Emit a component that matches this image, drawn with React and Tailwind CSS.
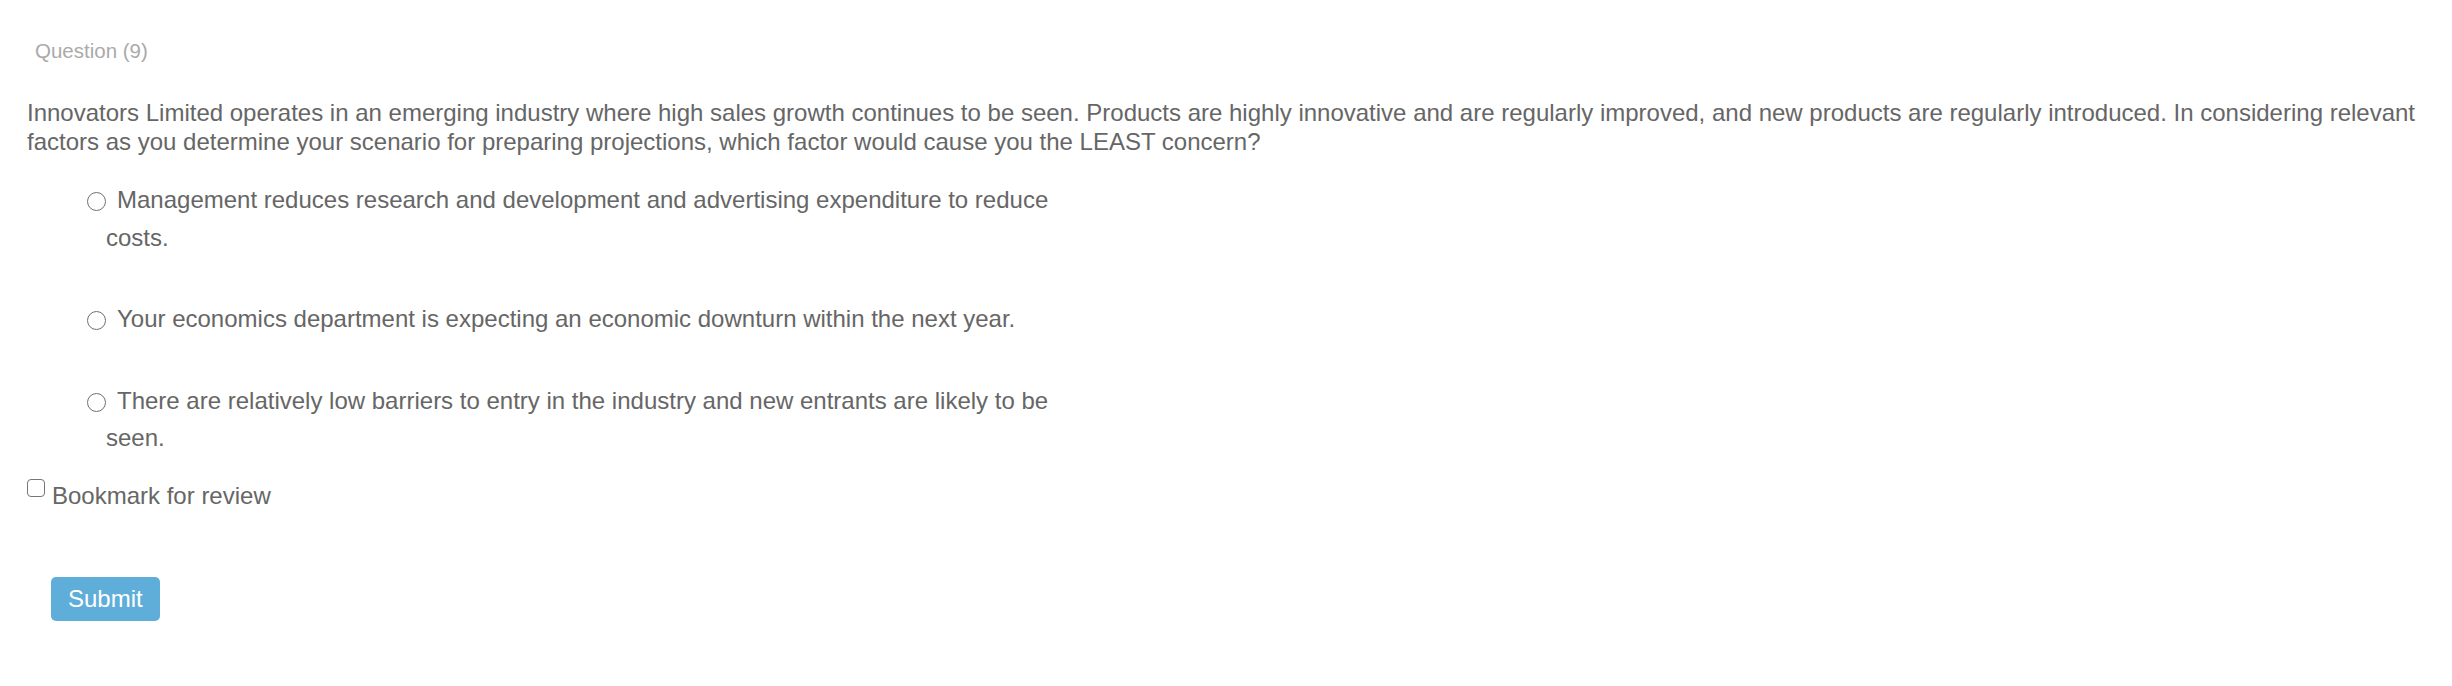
import React, { useState } from 'react';

const options = [
  'Management reduces research and development and advertising expenditure to reduce costs.',
  'Your economics department is expecting an economic downturn within the next year.',
  'There are relatively low barriers to entry in the industry and new entrants are likely to be seen.',
];

const App = () => {
  const [selected, setSelected] = useState(null);
  const [bookmarked, setBookmarked] = useState(false);

  return (
    <div className="min-h-screen bg-white font-['Liberation_Sans',Arial,sans-serif] text-[#666666]">
      <div className="pt-[39px] pl-[35px] text-[20.5px] leading-[23px] text-[#aaaaaa]">Question (9)</div>

      <p className="mt-[37px] pl-[27px] pr-[30px] text-[24px] leading-[28.5px]">
        Innovators Limited operates in an emerging industry where high sales growth continues to be seen. Products are
        highly innovative and are regularly improved, and new products are regularly introduced. In considering relevant
        factors as you determine your scenario for preparing projections, which factor would cause you the LEAST concern?
      </p>

      {/* Answer options */}
      <div className="mt-[25px] flex flex-col gap-[44px]">
        {options.map((opt, idx) => (
          <label
            key={idx}
            className="block w-[1072px] pl-[106px] text-[24px] leading-[37.5px] cursor-pointer"
            onClick={() => setSelected(idx)}
          >
            <span className="-ml-[19px] mr-[11px] inline-flex h-[19px] w-[19px] items-center justify-center rounded-full border-[1.5px] border-[#707070] align-[-3px]">
              {selected === idx && <span className="h-[10px] w-[10px] rounded-full bg-[#444]" />}
            </span>
            {opt}
          </label>
        ))}
      </div>

      <div className="mt-[22px] flex items-start pl-[27px]">
        <button
          type="button"
          onClick={() => setBookmarked(!bookmarked)}
          className="h-[18px] w-[18px] rounded-[4px] border-[1.5px] border-[#767676] bg-white"
        />
        <span className="ml-[7px] mt-[3px] text-[24px] leading-[28px]">Bookmark for review</span>
      </div>

      <div className="mt-[67px] pl-[51px]">
        <button
          type="button"
          className="h-[44px] rounded-[5px] bg-[#5faed9] px-[17px] text-[24px] leading-[28px] text-white"
        >
          Submit
        </button>
      </div>
    </div>
  );
};

export default App;
